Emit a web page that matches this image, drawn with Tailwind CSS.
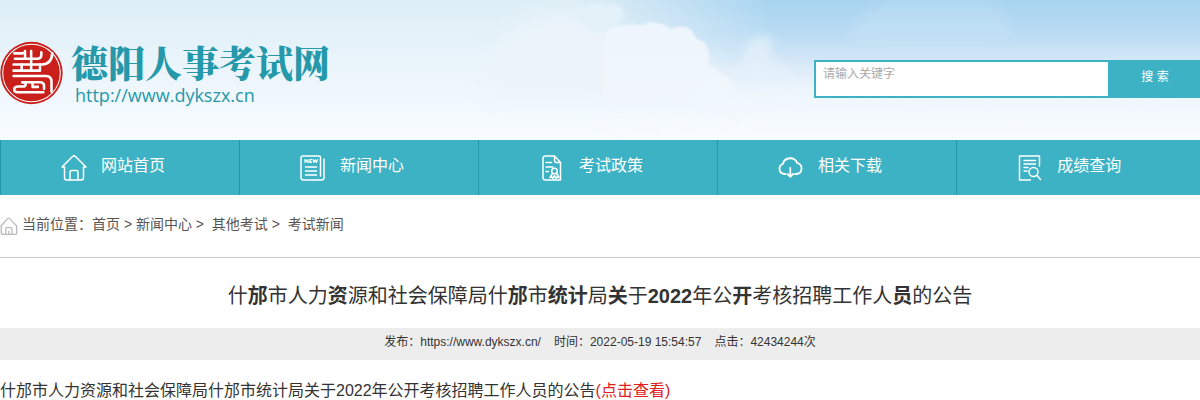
<!DOCTYPE html>
<html lang="zh-CN">
<head>
  <meta charset="UTF-8" />
  <meta name="viewport" content="width=device-width, initial-scale=1.0" />
  <title>德阳人事考试网</title>
  <script src="https://cdn.jsdelivr.net/npm/@tailwindcss/browser@4"></script>
</head>
<body class="bg-white text-[#333] font-['Liberation_Sans','Noto_Sans_CJK_SC',sans-serif]">

  <!-- Header -->
  <header class="relative h-[140px] flex items-start justify-between overflow-hidden">
    <!-- Sky -->
    <svg class="absolute inset-0 w-full h-full" viewBox="0 0 1200 140" preserveAspectRatio="none" aria-hidden="true">
      <defs>
        <linearGradient id="sky" x1="0" y1="0" x2="0" y2="1">
          <stop offset="0" stop-color="#ddeef6" />
          <stop offset="0.45" stop-color="#eaf4fb" />
          <stop offset="1" stop-color="#f8fcff" />
        </linearGradient>
        <linearGradient id="blue" x1="0" y1="0" x2="0" y2="1">
          <stop offset="0" stop-color="#a8d4f0" />
          <stop offset="0.25" stop-color="#bbdcf3" />
          <stop offset="0.5" stop-color="#dcebf8" />
          <stop offset="0.72" stop-color="#f0f6fc" />
          <stop offset="1" stop-color="#f8fcff" />
        </linearGradient>
        <linearGradient id="fade" x1="0" y1="0" x2="1" y2="0">
          <stop offset="0.48" stop-color="#000" />
          <stop offset="0.56" stop-color="#777" />
          <stop offset="0.64" stop-color="#fff" />
        </linearGradient>
        <linearGradient id="cloud" x1="0" y1="0" x2="0" y2="1">
          <stop offset="0" stop-color="#edf5fc" />
          <stop offset="0.6" stop-color="#f0f6fc" />
          <stop offset="1" stop-color="#f4f9fe" stop-opacity="0" />
        </linearGradient>
        <mask id="right"><rect width="1200" height="140" fill="url(#fade)" /></mask>
        <filter id="edge" x="-10%" y="-20%" width="120%" height="140%"><feGaussianBlur stdDeviation="1" /></filter>
        <filter id="soft" x="-30%" y="-60%" width="160%" height="220%"><feGaussianBlur stdDeviation="12" /></filter>
        <filter id="wisp" x="-40%" y="-40%" width="180%" height="180%"><feGaussianBlur stdDeviation="5" /></filter>
        <filter id="puff" x="-40%" y="-40%" width="180%" height="180%"><feGaussianBlur stdDeviation="2" /></filter>
      </defs>
      <rect width="1200" height="140" fill="url(#sky)" />
      <rect width="1200" height="140" fill="url(#blue)" mask="url(#right)" />
      <path d="M530 20 Q570 10 600 24 L640 55 L720 75 L720 95 L480 95 Q490 50 530 20Z" fill="#ecf4fb" filter="url(#soft)" />
      <path d="M570 8 Q584 10 592 4 Q600 2 606 4 Q616 2 622 8 Q627 18 616 23 L606 32 L586 28Z" fill="#e4f1f9" filter="url(#puff)" />
      <path d="M604 34 Q608 28 616 26 Q630 23 643 25 Q650 20 656 23 Q665 23 671 29 Q680 25 688 28 Q694 31 696 39 Q705 41 707 46 Q711 56 708 64 Q718 70 724 76 Q738 84 750 100 L740 120 L604 120 Q602 70 604 34Z" fill="url(#cloud)" filter="url(#edge)" />
      <path d="M744 52 Q748 42 756 36 Q764 38 772 37 Q774 46 770 56 Q790 70 800 84 L730 90Z" fill="#e3f0fa" fill-opacity="0.8" filter="url(#wisp)" />
      <path d="M690 88 Q760 76 860 84 L1240 92 L1240 110 L690 110Z" fill="#f2f8fd" fill-opacity="0.6" filter="url(#soft)" />
      <path d="M850 40 Q855 10 890 0 L990 0 Q1010 15 1012 38Z" fill="#fff" fill-opacity="0.1" filter="url(#wisp)" />
    </svg>

    <!-- Logo -->
    <a href="#" class="relative flex items-center pt-10 gap-2">
      <svg class="w-[63px] h-16 shrink-0" viewBox="0 0 186 186" aria-hidden="true">
        <circle cx="93" cy="93" r="92" fill="#c9201c" />
        <circle cx="93" cy="93" r="85" fill="none" stroke="#fff" stroke-width="3" />
        <g fill="none" stroke="#fff" stroke-width="7.500" stroke-linecap="round" stroke-linejoin="round">
          <path d="M42 35 H66 Q74 34 74 28" />
          <path d="M92 28 V86" />
          <path d="M74 34 V50" />
          <path d="M44 51 H112 Q122 50 122 40 V32" />
          <path d="M40 68 H124 Q154 66 154 34" />
          <path d="M40 86 H64 M64 86 V68 M64 86 H118 M118 68 V86" />
          <path d="M40 102 H136 Q152 103 152 118 V148" />
          <path d="M66 120 H120 Q130 121 130 130 V140" />
          <path d="M66 120 Q76 120 76 126 Q76 133 66 133 H52 Q42 134 42 142 Q42 150 52 150 H128" />
          <path d="M96 120 V134 H112" />
        </g>
      </svg>
      <span class="flex flex-col text-[#2599aa]">
        <span class="text-[37px] leading-[44px] font-black font-['Noto_Serif_CJK_SC','Noto_Sans_CJK_SC',serif]">德阳人事考试网</span>
        <span class="pl-1 text-[18px] leading-[22px] font-['Open_Sans',sans-serif]">http://www.dykszx.cn</span>
      </span>
    </a>

    <!-- Search -->
    <form class="relative flex mt-[60px] w-[386px] h-[38px] text-xs">
      <input type="text" aria-label="请输入关键字" placeholder="请输入关键字" class="min-w-0 flex-1 bg-white border-2 border-r-0 border-[#3db2c4] pl-[7px] pb-[10px] placeholder:text-[#aaa] outline-none" />
      <button type="submit" class="w-[92px] pb-1 pl-[2px] bg-[#3db2c4] text-white">搜 索</button>
    </form>
  </header>

  <!-- Main navigation -->
  <nav class="grid grid-cols-[repeat(5,19.92%)] bg-[#3db2c4] text-white">
    <a href="#" class="flex items-center gap-3 h-[55px] pl-[60px] border-l border-[#2699a9]">
      <svg class="w-7 h-7" viewBox="0 0 28 28" fill="none" stroke="currentColor" stroke-width="1.5" stroke-linecap="round" stroke-linejoin="round" aria-hidden="true">
        <path d="M1 13 L11.500 2.500 Q13 1.200 14.500 2.500 L25 13 H22.500 V23.500 Q22.500 26 20 26 H6 Q3.500 26 3.500 23.500 V13 Z" />
        <path d="M9 26 V18 Q9 16.500 10.500 16.500 H15.500 Q17 16.500 17 18 V26" />
      </svg>
      <span class="pb-1">网站首页</span>
    </a>
    <a href="#" class="flex items-center gap-3 h-[55px] pl-[60px] border-l border-[#2699a9]">
      <svg class="w-7 h-7" viewBox="0 0 28 28" fill="none" stroke="currentColor" stroke-width="1.5" stroke-linecap="round" stroke-linejoin="round" aria-hidden="true">
        <path d="M20.500 22 V3.500 Q20.500 2 19 2 H3 Q1 2 1 4 V23.500 Q1 26 3.500 26 H21.500 Q24 26 24 23.500 V5" />
        <path d="M5.500 13 H16.500 M5.500 17 H16.500 M5.500 21 H16.500" />
        <path d="M5 8.500 V5.500 L8 8.500 V5.500 M11.500 5.500 H9.800 V8.500 H11.500 M9.800 7 H11.200 M13 5.500 L14 8.500 L15.200 5.800 L16.400 8.500 L17.500 5.500" stroke-width="1.200" />
      </svg>
      <span class="pb-1">新闻中心</span>
    </a>
    <a href="#" class="flex items-center gap-3 h-[55px] pl-[60px] border-l border-[#2699a9]">
      <svg class="w-7 h-7" viewBox="0 0 28 28" fill="none" stroke="currentColor" stroke-width="1.5" stroke-linecap="round" stroke-linejoin="round" aria-hidden="true">
        <path d="M15.500 2 H6.500 Q4 2 4 4.500 V23.500 Q4 26 6.500 26 H21.500 V8.500 Z" />
        <path d="M15.500 2 V6.500 Q15.500 8.500 17.500 8.500 H21.500" />
        <path d="M7 8.500 H12.500 M7 13 H14 M7 17.500 H9.500" />
        <circle cx="15.500" cy="17" r="2.800" />
        <path d="M13.500 19.500 L11 23.500 L13.200 23 L14 24.500 L15.500 21.500 L17 24.500 L17.800 23 L20 23.500 L17.500 19.500" />
      </svg>
      <span class="pb-1">考试政策</span>
    </a>
    <a href="#" class="flex items-center gap-3 h-[55px] pl-[60px] border-l border-[#2699a9]">
      <svg class="w-7 h-7" viewBox="0 0 28 28" fill="none" stroke="currentColor" stroke-width="1.800" stroke-linecap="round" stroke-linejoin="round" aria-hidden="true">
        <path d="M7.500 20 H6 A5.200 5.200 0 0 1 4.800 10 A7.600 7.600 0 0 1 19.300 9.200 A5.500 5.500 0 0 1 18.800 20 H17" />
        <path d="M12.300 14 V22.500 M9.500 20 L12.300 22.800 L15.100 20" />
      </svg>
      <span class="pb-1">相关下载</span>
    </a>
    <a href="#" class="flex items-center gap-3 h-[55px] pl-[60px] border-l border-[#2699a9]">
      <svg class="w-7 h-7" viewBox="0 0 28 28" fill="none" stroke="currentColor" stroke-width="1.500" stroke-linecap="round" stroke-linejoin="round" aria-hidden="true">
        <path d="M22.500 12 V2 H2.500 V26 H13.500" />
        <path d="M7 6.500 H18.500 M7 10 H18.500 M7 13.500 H11 M7 17 H10" />
        <circle cx="16.500" cy="18" r="4.500" />
        <path d="M19.800 21.300 L23.500 25.500" />
      </svg>
      <span class="pb-1">成绩查询</span>
    </a>
  </nav>

  <main>
    <!-- Breadcrumb -->
    <div class="flex items-center gap-1 h-[63px] border-b border-[#ccc] text-sm text-[#555]">
      <svg class="w-[18px] h-[18px]" viewBox="0 0 27 28" fill="none" stroke="#bbb" stroke-width="2" stroke-linecap="round" stroke-linejoin="round" aria-hidden="true">
        <path d="M1 14 L11.500 2.500 Q13 1.200 14.500 2.500 L25.500 14 V24 Q25.500 27 22.500 27 H4.500 Q1.500 27 1.500 24 V14" />
        <path d="M8.500 27 V18 Q8.500 16.500 10 16.500 H16.500 Q18 16.500 18 18 V27 M13.200 26 V22" />
      </svg>
      <p class="pb-1">当前位置：<a href="#">首页</a> &gt; <a href="#">新闻中心</a> &gt; &nbsp;<a href="#">其他考试</a> &gt; &nbsp;<a href="#">考试新闻</a></p>
    </div>

    <!-- Article -->
    <h1 class="pt-[23px] pb-[17px] text-center text-[20px] leading-[30px]">什<b>邡</b>市人力<b>资</b>源和社会保障局什<b>邡</b>市<b>统计</b>局<b>关</b>于<b>2022</b>年公<b>开</b>考核招聘工作人<b>员</b>的公告</h1>
    <p class="flex justify-center gap-[13px] bg-[#ededed] h-8 text-xs leading-7">
      <span>发布：https://www.dykszx.cn/</span>
      <span>时间：2022-05-19 15:54:57</span>
      <span>点击：42434244次</span>
    </p>
    <p class="pt-[19px] leading-6">什邡市人力资源和社会保障局什邡市统计局关于2022年公开考核招聘工作人员的公告<a href="#" class="text-[#e02020]">(点击查看)</a></p>
  </main>

</body>
</html>
